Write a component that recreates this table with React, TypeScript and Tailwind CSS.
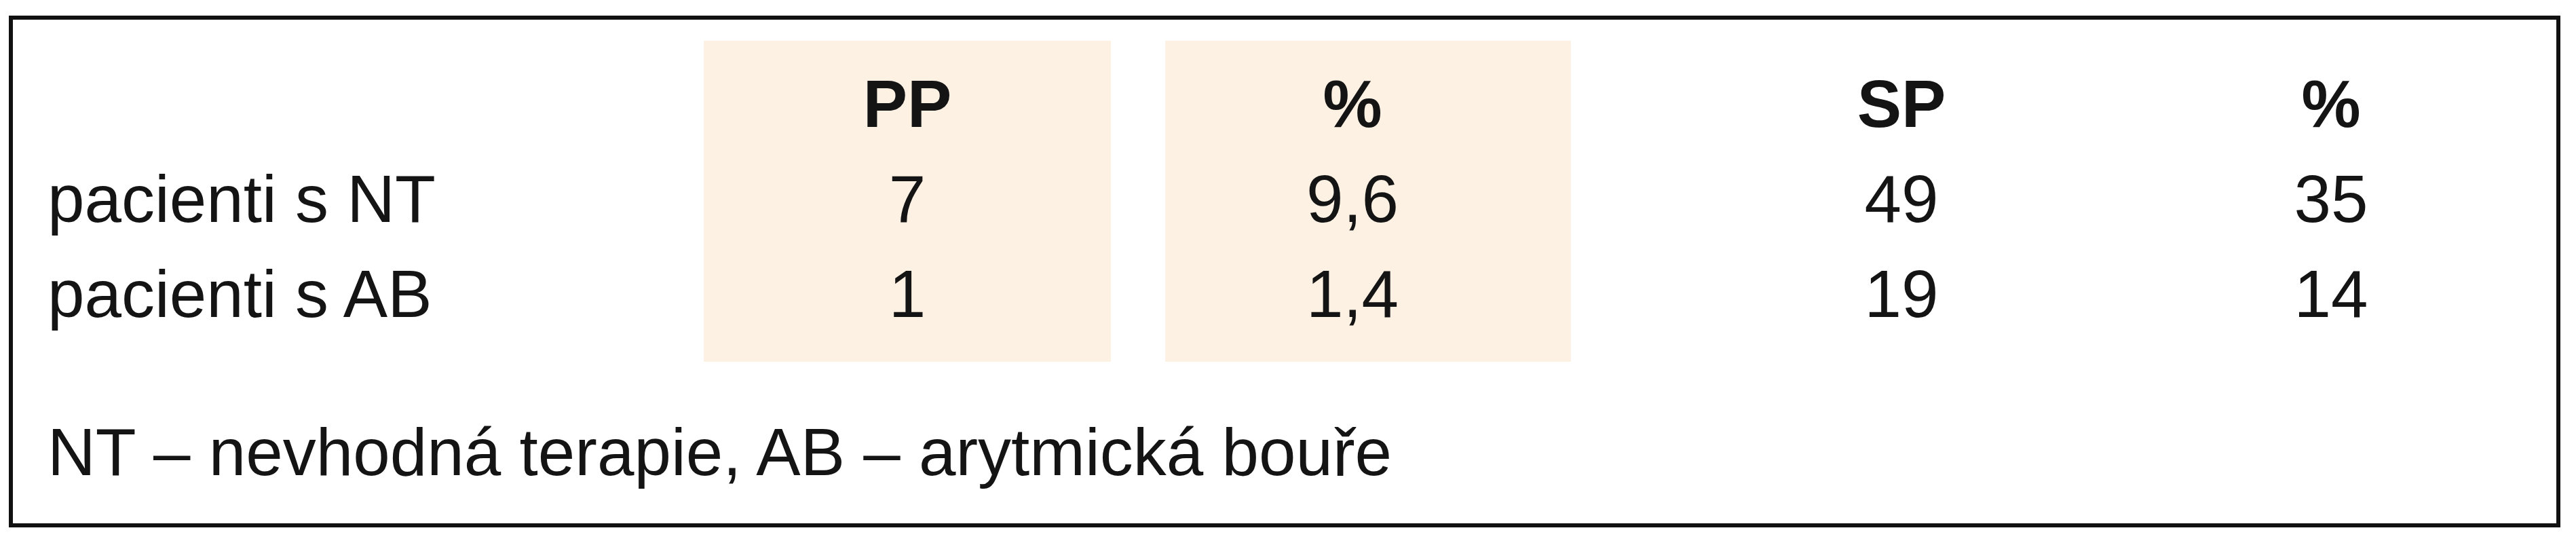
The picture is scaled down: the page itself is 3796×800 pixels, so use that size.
const rows = [
  { label: 'pacienti s NT', pp: '7', ppPct: '9,6', sp: '49', spPct: '35' },
  { label: 'pacienti s AB', pp: '1', ppPct: '1,4', sp: '19', spPct: '14' },
];

function ShadedColumn({ head, values, width }: { head: string; values: string[]; width: string }) {
  return (
    <div className={`${width} flex flex-col items-center bg-[#fdf1e3] pt-[23px] pb-[30px]`}>
      <div className="font-bold">{head}</div>
      {values.map((v, i) => (
        <div key={i}>{v}</div>
      ))}
    </div>
  );
}

function PlainColumn({ head, values, width }: { head: string; values: string[]; width: string }) {
  return (
    <div className={`${width} flex flex-col items-center pt-[23px] pb-[30px]`}>
      <div className="font-bold">{head}</div>
      {values.map((v, i) => (
        <div key={i}>{v}</div>
      ))}
    </div>
  );
}

export default function App() {
  return (
    <div className="w-[3796px] h-[800px] bg-white pt-[23px] pl-[13px] font-['Liberation_Sans',Arial,sans-serif] text-[98px] leading-[140px] text-[#141414]">
      <div className="w-[3760px] h-[754px] border-[6px] border-[#111] pt-[31px]">
        <div className="flex">
          <div className="w-[1018px] pl-[51px] pt-[23px] pb-[30px] flex flex-col">
            <div>&nbsp;</div>
            {rows.map((r) => (
              <div key={r.label} className="whitespace-nowrap">{r.label}</div>
            ))}
          </div>
          <ShadedColumn head="PP" values={rows.map((r) => r.pp)} width="w-[600px]" />
          <div className="w-[80px]" />
          <ShadedColumn head="%" values={rows.map((r) => r.ppPct)} width="w-[598px] pr-[46px]" />
          <PlainColumn head="SP" values={rows.map((r) => r.sp)} width="w-[974px]" />
          <PlainColumn head="%" values={rows.map((r) => r.spPct)} width="w-[292px]" />
        </div>
        <div className="pl-[51px] mt-[63px] whitespace-nowrap">
          NT – nevhodná terapie, AB – arytmická bouře
        </div>
      </div>
    </div>
  );
}
